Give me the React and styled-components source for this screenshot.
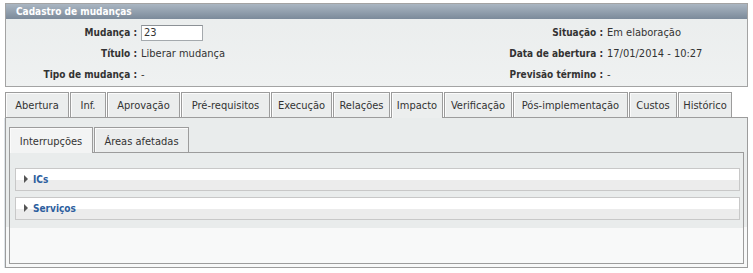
import React from 'react';
import styled, { createGlobalStyle } from 'styled-components';

const GlobalStyle = createGlobalStyle`
  body {
    margin: 0;
    background: #fff;
    font-family: "DejaVu Sans Condensed", "DejaVu Sans", Verdana, sans-serif;
    font-size: 11px;
    color: #333;
  }
`;

const Page = styled.div`
  width: 743px;
  padding: 3px 0 0 5px;
`;

const Card = styled.section`
  border: 1px solid #a3a3a3;
  background: linear-gradient(#eaeded, #eff1f1);
`;

const CardTitle = styled.div`
  height: 15px;
  line-height: 15px;
  padding-left: 10px;
  color: #fff;
  font-weight: bold;
  font-size: 10px;
  background: linear-gradient(#aab6c2, #7b8a9a);
`;

const FieldGrid = styled.div`
  display: grid;
  grid-template-columns: 131px 339px 119px 1fr;
  grid-auto-rows: 21px;
  column-gap: 4px;
  align-items: center;
  padding: 3px 0 1px;
`;

const Label = styled.div`
  text-align: right;
  font-weight: bold;
  font-size: 10px;
  color: #333;
  white-space: nowrap;
`;

const Value = styled.div`
  white-space: nowrap;
  color: #333;
`;

const NumberInput = styled.input`
  box-sizing: border-box;
  width: 62px;
  height: 16px;
  padding: 0 2px;
  border: 1px solid #a4a9ad;
  border-top-color: #8c9196;
  background: #fff;
  font: inherit;
  color: #333;
`;

const TabBar = styled.div`
  display: flex;
  align-items: flex-start;
  gap: 1px;
  margin-top: ${p => p.$top}px;
`;

const Tab = styled.div`
  position: relative;
  box-sizing: border-box;
  width: ${p => p.$w}px;
  height: ${p => (p.$active ? p.$h + 1 : p.$h)}px;
  margin-bottom: ${p => (p.$active ? -1 : 0)}px;
  border: 1px solid #9c9c9c;
  border-bottom: none;
  box-shadow: inset 1px 1px 0 #fbfbfb;
  background: ${p => (p.$active ? p.$activeBg : '#ebeded')};
  display: flex;
  justify-content: center;
  padding-top: ${p => p.$pad}px;
  white-space: nowrap;
  color: #333;
  cursor: pointer;
`;

const Panel = styled.div`
  box-sizing: border-box;
  border: 1px solid #9c9c9c;
  padding: 9px 3px 3px;
  background: linear-gradient(#e9ecec 0 73%, #f7f8f8 73% 100%);
  box-shadow: -1px 1px 0 #dfe5ea;
`;

const InnerPanel = styled.div`
  border: 1px solid #9c9c9c;
  background: #f8f9f9;
  min-height: 110px;
`;

const AccordionList = styled.div`
  display: flex;
  flex-direction: column;
  gap: 6px;
  padding: 15px 3px 8px 5px;
  background: #e9ecec;
`;

const AccordionHeader = styled.div`
  box-sizing: border-box;
  height: 23px;
  border: 1px solid #c8c8c8;
  background: linear-gradient(#fff 0 52%, #ececec 52% 100%);
  display: flex;
  align-items: center;
  gap: 5px;
  padding-left: 8px;
  padding-bottom: 1px;
  font-weight: bold;
  font-size: 10px;
  color: #2c5e9e;
  cursor: pointer;
`;

const Arrow = styled.span`
  width: 0;
  height: 0;
  border-left: 4px solid #555;
  border-top: 4px solid transparent;
  border-bottom: 4px solid transparent;
`;

const mainTabs = [
  ['Abertura', 64],
  ['Inf.', 36],
  ['Aprovação', 73],
  ['Pré-requisitos', 89],
  ['Execução', 61],
  ['Relações', 57],
  ['Impacto', 52],
  ['Verificação', 68],
  ['Pós-implementação', 115],
  ['Custos', 48],
  ['Histórico', 54],
];

const impactTabs = [
  ['Interrupções', 84],
  ['Áreas afetadas', 95],
];

export default function App() {
  return (
    <Page>
      <GlobalStyle />
      <Card>
        <CardTitle>Cadastro de mudanças</CardTitle>
        <FieldGrid>
          <Label>Mudança :</Label>
          <Value>
            <NumberInput defaultValue="23" />
          </Value>
          <Label>Situação :</Label>
          <Value>Em elaboração</Value>

          <Label>Título :</Label>
          <Value>Liberar mudança</Value>
          <Label>Data de abertura :</Label>
          <Value>17/01/2014 - 10:27</Value>

          <Label>Tipo de mudança :</Label>
          <Value>-</Value>
          <Label>Previsão término :</Label>
          <Value>-</Value>
        </FieldGrid>
      </Card>

      <TabBar $top={5}>
        {mainTabs.map(([label, w]) => (
          <Tab key={label} $w={w} $h={25} $pad={6} $active={label === 'Impacto'} $activeBg="#eceeee">
            {label}
          </Tab>
        ))}
      </TabBar>
      <Panel>
        <TabBar $top={0}>
          {impactTabs.map(([label, w]) => (
            <Tab key={label} $w={w} $h={25} $pad={7} $active={label === 'Interrupções'} $activeBg="#f3f4f4">
              {label}
            </Tab>
          ))}
        </TabBar>
        <InnerPanel>
          <AccordionList>
            <AccordionHeader>
              <Arrow />
              ICs
            </AccordionHeader>
            <AccordionHeader>
              <Arrow />
              Serviços
            </AccordionHeader>
          </AccordionList>
        </InnerPanel>
      </Panel>
    </Page>
  );
}
